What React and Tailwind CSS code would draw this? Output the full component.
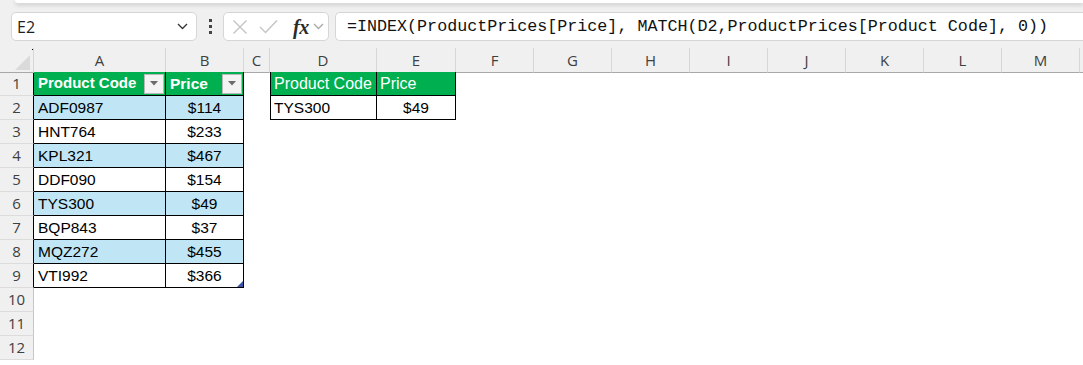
import React from "react";

const COLS = ["A", "B", "C", "D", "E", "F", "G", "H", "I", "J", "K", "L", "M"];

const products = [
  ["ADF0987", "$114"],
  ["HNT764", "$233"],
  ["KPL321", "$467"],
  ["DDF090", "$154"],
  ["TYS300", "$49"],
  ["BQP843", "$37"],
  ["MQZ272", "$455"],
  ["VTI992", "$366"],
];

const FilterButton = () => (
  <div className="ml-auto mr-px w-[20px] h-[20px] bg-[#f3f3f3] border border-[#b9b9b9] flex items-center justify-center shrink-0">
    <svg width="8" height="5" viewBox="0 0 8 5">
      <path d="M0 0 L8 0 L4 4.5 Z" fill="#6b6b6b" />
    </svg>
  </div>
);

const Chevron = ({ color = "#333", w = 11 }) => (
  <svg width={w} height="7" viewBox="0 0 11 7" fill="none">
    <path d="M1 1 L5.5 5.5 L10 1" stroke={color} strokeWidth="1.3" />
  </svg>
);

function Toolbar() {
  return (
    <div className="h-[48px] bg-[#f0f0f0] relative">
      <div className="absolute left-[15px] right-0 top-0 h-[3px] bg-white rounded-bl-md shadow-[0_2px_4px_rgba(0,0,0,0.18)]" />
      <div className="flex items-start pt-[12px] pl-[11px]">
        <div className="w-[186px] h-[29px] bg-white border border-[#d6d6d6] rounded-[5px] flex items-center pl-[5px] pr-[8px]">
          <span className="text-[16px] text-[#1f1f1f] font-['Open_Sans',sans-serif]">E2</span>
          <div className="ml-auto">
            <Chevron />
          </div>
        </div>
        <div className="w-[26px] h-[29px] flex flex-col items-center justify-center gap-[3px]">
          <div className="w-[3px] h-[3px] bg-[#444]" />
          <div className="w-[3px] h-[3px] bg-[#444]" />
          <div className="w-[3px] h-[3px] bg-[#444]" />
        </div>
        <div className="w-[106px] h-[29px] bg-white border border-[#d6d6d6] rounded-[5px] flex items-center pl-[8px]">
          <svg width="16" height="16" viewBox="0 0 16 16" fill="none">
            <path d="M1.5 1.5 L14.5 14.5 M14.5 1.5 L1.5 14.5" stroke="#c4c4c4" strokeWidth="1.4" />
          </svg>
          <svg width="19" height="15" viewBox="0 0 19 15" fill="none" className="ml-[11px]">
            <path d="M1 8 L6.5 13.5 L18 1.5" stroke="#c4c4c4" strokeWidth="1.4" />
          </svg>
          <span className="ml-[15px] text-[20px] leading-none italic font-bold text-[#2b2b2b] font-['Liberation_Serif',serif] tracking-[-0.5px]">
            fx
          </span>
          <div className="ml-[4px]">
            <Chevron color="#a9a9a9" w={11} />
          </div>
        </div>
        <div className="ml-[6px] flex-1 h-[29px] bg-white border border-r-0 border-[#d6d6d6] rounded-l-[5px] flex items-center pl-[11px]">
          <span className="text-[16.7px] text-[#111] font-['Liberation_Mono',monospace] whitespace-nowrap">
            =INDEX(ProductPrices[Price], MATCH(D2,ProductPrices[Product Code], 0))
          </span>
        </div>
      </div>
    </div>
  );
}

function Cell({ children, className = "" }) {
  return <div className={`h-[24px] flex items-center ${className}`}>{children}</div>;
}

function Sheet() {
  const rows = Array.from({ length: 12 }, (_, i) => i + 1);
  const cellFont = "font-['Liberation_Sans',sans-serif] text-[15.5px] text-black pt-px";

  return (
    <div className="grid grid-cols-[34px_132px_78px_26px_107px_79px_78px_78px_78px_78px_78px_78px_78px_78px_1fr] auto-rows-[24px] bg-white font-['Open_Sans',sans-serif]">
      {/* header row */}
      <div className="h-[25px] bg-[#f0f0f0] border-b border-b-[#a8a8a8] border-r border-r-[#d6d6d6] relative">
        <div className="absolute right-[3px] bottom-[2px] w-0 h-0 border-l-[15px] border-l-transparent border-b-[15px] border-b-[#dadada]" />
        <div className="absolute right-0 top-[1px] w-px h-px bg-black" />
      </div>
      {COLS.map((c) => (
        <div
          key={c}
          className="h-[25px] bg-[#f0f0f0] border-b border-b-[#a8a8a8] border-r border-r-[#d6d6d6] flex items-center justify-center text-[15px] text-[#3f3f3f] pt-px"
        >
          {c}
        </div>
      ))}
      <div className="h-[25px] bg-[#f0f0f0] border-b border-b-[#a8a8a8]" />

      {rows.map((r) => {
        const inTable = r <= 9;
        const p = r >= 2 && r <= 9 ? products[r - 2] : null;
        const blue = r % 2 === 0 && r <= 9;
        const rowBg = blue ? "bg-[#c0e6f5]" : "bg-white";
        return (
          <React.Fragment key={r}>
            <div
              className={`h-[24px] bg-[#f0f0f0] border-b border-b-[#dcdcdc] border-r flex items-center justify-center text-[15px] text-[#3f3f3f] ${
                inTable ? "border-r-black" : "border-r-[#c6c6c6]"
              }`}
            >
              {r}
            </div>

            {/* A */}
            {r === 1 ? (
              <Cell className="bg-[#00b050] border-r border-b border-black pl-[4px]">
                <span className="font-['Liberation_Sans',sans-serif] text-[15px] font-bold text-white whitespace-nowrap">
                  Product Code
                </span>
                <FilterButton />
              </Cell>
            ) : p ? (
              <Cell className={`${rowBg} border-r border-b border-black pl-[4px] ${cellFont}`}>{p[0]}</Cell>
            ) : (
              <Cell />
            )}

            {/* B */}
            {r === 1 ? (
              <Cell className="bg-[#00b050] border-r border-b border-black pl-[4px]">
                <span className="font-['Liberation_Sans',sans-serif] text-[15.5px] font-bold text-white">Price</span>
                <FilterButton />
              </Cell>
            ) : p ? (
              <Cell className={`${rowBg} border-r border-b border-black justify-center relative ${cellFont}`}>
                {p[1]}
                {r === 9 && (
                  <div className="absolute right-0 bottom-0 w-0 h-0 border-l-[6px] border-l-transparent border-b-[6px] border-b-[#3a55a8]" />
                )}
              </Cell>
            ) : (
              <Cell />
            )}

            {/* C */}
            <Cell />

            {/* D, E */}
            {r === 1 ? (
              <>
                <Cell className="bg-[#00b050] border-l border-r border-b border-black pl-[3px]">
                  <span className="font-['Liberation_Sans',sans-serif] text-[16px] text-white">Product Code</span>
                </Cell>
                <Cell className="bg-[#00b050] border-r border-b border-black pl-[3px]">
                  <span className="font-['Liberation_Sans',sans-serif] text-[16px] text-white">Price</span>
                </Cell>
              </>
            ) : r === 2 ? (
              <>
                <Cell className={`bg-white border-l border-r border-b border-black pl-[3px] ${cellFont}`}>TYS300</Cell>
                <Cell className={`bg-white border-r border-b border-black justify-center ${cellFont}`}>$49</Cell>
              </>
            ) : (
              <>
                <Cell />
                <Cell />
              </>
            )}

            {/* F..M and rest */}
            {Array.from({ length: 9 }, (_, i) => (
              <Cell key={i} />
            ))}
          </React.Fragment>
        );
      })}
    </div>
  );
}

export default function App() {
  return (
    <div className="w-[1083px] h-[365px] overflow-hidden bg-white">
      <Toolbar />
      <Sheet />
    </div>
  );
}
